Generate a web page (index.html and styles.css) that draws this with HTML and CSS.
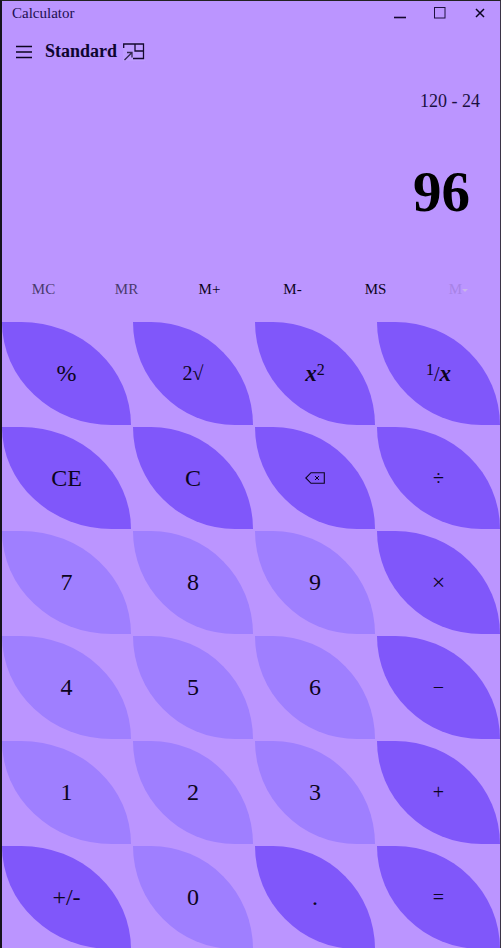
FILE: index.html
```html
<!DOCTYPE html>
<html lang="en">
<head>
  <meta charset="UTF-8" />
  <meta name="viewport" content="width=device-width, initial-scale=1.0"/>
  <title>Calculator</title>
  <link rel="stylesheet" href="styles.css">
</head>
<body>
  <div class="window">
    <div class="titlebar">
      <span class="app-name">Calculator</span>
      <div class="controls">
        <span class="control"><svg width="12" height="12" viewBox="0 0 12 12"><path d="M0 10.5H12" stroke="#14082e" stroke-width="1.6"/></svg></span>
        <span class="control"><svg width="12" height="12" viewBox="0 0 12 12"><rect x="0.5" y="0.5" width="10.5" height="10.5" fill="none" stroke="#1d1040" stroke-width="1"/></svg></span>
        <span class="control"><svg width="10" height="10" viewBox="0 0 10 10"><path d="M1 1L9 9M9 1L1 9" stroke="#0c0420" stroke-width="1.5"/></svg></span>
      </div>
    </div>

    <div class="header">
      <svg class="menu-icon" width="18" height="14" viewBox="0 0 18 14"><path d="M1 1.5H17M1 7H17M1 12.5H17" stroke="#0c0420" stroke-width="1.4"/></svg>
      <span class="mode">Standard</span>
      <svg class="keep-icon" width="22" height="19" viewBox="0 0 22 19">
        <rect width="22" height="19" fill="#bf9dff"/>
        <path d="M0.7 6V2H20.5V16.5H10M12 2V9H20.5" fill="none" stroke="#14082e" stroke-width="1.3"/>
        <path d="M1.5 18L9 10.5M4 10.5H9V15.5" fill="none" stroke="#33284f" stroke-width="1.3"/>
      </svg>
    </div>

    <div class="expression">120 - 24</div>
    <div class="result">96</div>

    <div class="memory">
      <span class="dim">MC</span>
      <span class="dim">MR</span>
      <span>M+</span>
      <span>M-</span>
      <span>MS</span>
      <span class="off">M<i class="caret"></i></span>
    </div>

    <div class="keys">
      <button class="key dark">%</button>
      <button class="key dark small">2√</button>
      <button class="key dark small"><span><span class="math">x</span><sup>2</sup></span></button>
      <button class="key dark small"><span><sup>1</sup>/<span class="math">x</span></span></button>

      <button class="key dark">CE</button>
      <button class="key dark">C</button>
      <button class="key dark">
        <svg width="20" height="12" viewBox="0 0 20 12"><path d="M6 0.7H19.3V11.3H6L0.8 6Z" fill="none" stroke="#0c0420" stroke-width="1.1"/><path d="M10 4L14 8M14 4L10 8" stroke="#0c0420" stroke-width="1"/></svg>
      </button>
      <button class="key dark small">÷</button>

      <button class="key light">7</button>
      <button class="key light">8</button>
      <button class="key light">9</button>
      <button class="key dark">×</button>

      <button class="key light">4</button>
      <button class="key light">5</button>
      <button class="key light">6</button>
      <button class="key dark small">−</button>

      <button class="key light">1</button>
      <button class="key light">2</button>
      <button class="key light">3</button>
      <button class="key dark small">+</button>

      <button class="key dark">+/-</button>
      <button class="key light">0</button>
      <button class="key dark">.</button>
      <button class="key dark small">=</button>
    </div>
  </div>
</body>
</html>
```

FILE: styles.css
```css
html, body {
  margin: 0;
  height: 100%;
  overflow: hidden;
}

body {
  font-family: "Liberation Serif", serif;
  background-color: #bb95ff;
  color: #0c0420;
}

.window {
  height: 948px;
  box-sizing: border-box;
  border-top: 1px solid #222;
  border-left: 2px solid #16121e;
  border-right: 1px solid #3a3446;
  overflow: hidden;
}

.titlebar {
  display: flex;
  justify-content: space-between;
  height: 26px;
  padding-left: 10px;
}

.app-name {
  font-size: 15px;
  line-height: 24px;
  color: #1c0f50;
}

.controls {
  display: flex;
}

.control {
  width: 40px;
  height: 24px;
  display: flex;
  align-items: center;
  justify-content: center;
}

.header {
  display: flex;
  align-items: center;
  height: 49px;
  padding-left: 13px;
}

.mode {
  font-size: 18px;
  font-weight: bold;
  margin-left: 12px;
  color: #0e0530;
}

.keep-icon {
  margin-left: 6px;
}

.expression {
  font-size: 18px;
  line-height: 22px;
  text-align: right;
  padding: 14px 20px 0 0;
  color: #1a1040;
}

.result {
  font-size: 57px;
  font-weight: bold;
  line-height: 70px;
  text-align: right;
  padding: 45px 30px 0 0;
  color: #000;
}

.memory {
  display: grid;
  grid-template-columns: repeat(6, 83px);
  height: 95px;
  padding-top: 52px;
  box-sizing: border-box;
  font-size: 15px;
}

.memory span {
  text-align: center;
  line-height: 20px;
}

.memory .dim {
  color: #4a3a6e;
}

.memory .off {
  color: #a883e6;
}

.caret {
  display: inline-block;
  border-top: 3px solid #c8b4ea;
  border-left: 3px solid transparent;
  border-right: 3px solid transparent;
  vertical-align: middle;
}

.keys {
  display: grid;
  grid-template-columns: 129px 120px 120px 123px;
  grid-template-rows: 103px 102px 103px 103px 103px 103px;
  gap: 2px;
}

.key {
  border: none;
  padding: 0;
  font-family: inherit;
  font-size: 24px;
  color: #0c0420;
  border-radius: 0 85% 0 85% / 0 100% 0 100%;
  display: flex;
  align-items: center;
  justify-content: center;
}

.key.small {
  font-size: 20px;
}

.dark {
  background-color: #8057fa;
}

.light {
  background-color: #9f7fff;
}

.math {
  font-style: italic;
  font-weight: bold;
  font-size: 23px;
}

sup {
  font-size: 16px;
  line-height: 0;
  vertical-align: 6px;
}
```
